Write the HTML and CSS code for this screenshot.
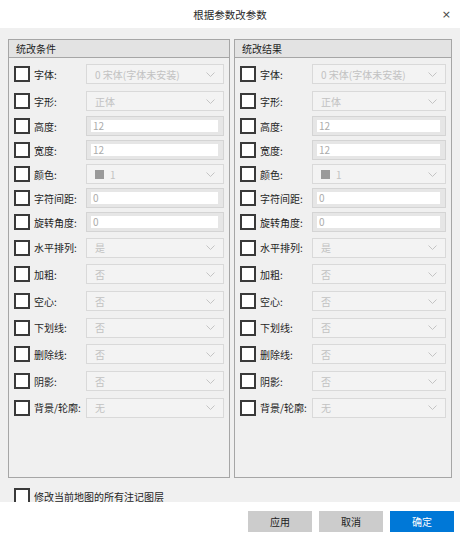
FILE: index.html
```html
<!DOCTYPE html>
<html lang="zh-CN">
<head>
<meta charset="utf-8">
<title>根据参数改参数</title>
<link rel="stylesheet" href="styles.css">
</head>
<body>
<div class="dialog">
  <div class="titlebar">
    <span></span>
    <span class="title">根据参数改参数</span>
    <span class="close">×</span>
  </div>
  <div class="main">
    <div class="groups">
      <section class="group group-left">
        <div class="group-head">统改条件</div>
        <div class="rows">
          <div class="row combo-row"><span class="chk"></span><span class="lbl">字体:</span><div class="combo"><span class="val">0 宋体(字体未安装)</span><svg class="chev" width="9" height="5" viewBox="0 0 9 5"><polyline points="0.5,0.5 4.5,4.5 8.5,0.5" fill="none" stroke="#c4c4c4" stroke-width="1"/></svg></div></div>
          <div class="row combo-row"><span class="chk"></span><span class="lbl">字形:</span><div class="combo"><span class="val">正体</span><svg class="chev" width="9" height="5" viewBox="0 0 9 5"><polyline points="0.5,0.5 4.5,4.5 8.5,0.5" fill="none" stroke="#c4c4c4" stroke-width="1"/></svg></div></div>
          <div class="row text-row"><span class="chk"></span><span class="lbl">高度:</span><div class="edit"><span class="field">12</span></div></div>
          <div class="row text-row"><span class="chk"></span><span class="lbl">宽度:</span><div class="edit"><span class="field">12</span></div></div>
          <div class="row text-row"><span class="chk"></span><span class="lbl">颜色:</span><div class="combo"><span class="swatch"></span><span class="val">1</span><svg class="chev" width="9" height="5" viewBox="0 0 9 5"><polyline points="0.5,0.5 4.5,4.5 8.5,0.5" fill="none" stroke="#c4c4c4" stroke-width="1"/></svg></div></div>
          <div class="row text-row"><span class="chk"></span><span class="lbl">字符间距:</span><div class="edit"><span class="field">0</span></div></div>
          <div class="row text-row"><span class="chk"></span><span class="lbl">旋转角度:</span><div class="edit"><span class="field">0</span></div></div>
          <div class="row combo-row"><span class="chk"></span><span class="lbl">水平排列:</span><div class="combo"><span class="val">是</span><svg class="chev" width="9" height="5" viewBox="0 0 9 5"><polyline points="0.5,0.5 4.5,4.5 8.5,0.5" fill="none" stroke="#c4c4c4" stroke-width="1"/></svg></div></div>
          <div class="row combo-row"><span class="chk"></span><span class="lbl">加粗:</span><div class="combo"><span class="val">否</span><svg class="chev" width="9" height="5" viewBox="0 0 9 5"><polyline points="0.5,0.5 4.5,4.5 8.5,0.5" fill="none" stroke="#c4c4c4" stroke-width="1"/></svg></div></div>
          <div class="row combo-row"><span class="chk"></span><span class="lbl">空心:</span><div class="combo"><span class="val">否</span><svg class="chev" width="9" height="5" viewBox="0 0 9 5"><polyline points="0.5,0.5 4.5,4.5 8.5,0.5" fill="none" stroke="#c4c4c4" stroke-width="1"/></svg></div></div>
          <div class="row combo-row"><span class="chk"></span><span class="lbl">下划线:</span><div class="combo"><span class="val">否</span><svg class="chev" width="9" height="5" viewBox="0 0 9 5"><polyline points="0.5,0.5 4.5,4.5 8.5,0.5" fill="none" stroke="#c4c4c4" stroke-width="1"/></svg></div></div>
          <div class="row combo-row"><span class="chk"></span><span class="lbl">删除线:</span><div class="combo"><span class="val">否</span><svg class="chev" width="9" height="5" viewBox="0 0 9 5"><polyline points="0.5,0.5 4.5,4.5 8.5,0.5" fill="none" stroke="#c4c4c4" stroke-width="1"/></svg></div></div>
          <div class="row combo-row"><span class="chk"></span><span class="lbl">阴影:</span><div class="combo"><span class="val">否</span><svg class="chev" width="9" height="5" viewBox="0 0 9 5"><polyline points="0.5,0.5 4.5,4.5 8.5,0.5" fill="none" stroke="#c4c4c4" stroke-width="1"/></svg></div></div>
          <div class="row combo-row"><span class="chk"></span><span class="lbl">背景/轮廓:</span><div class="combo"><span class="val">无</span><svg class="chev" width="9" height="5" viewBox="0 0 9 5"><polyline points="0.5,0.5 4.5,4.5 8.5,0.5" fill="none" stroke="#c4c4c4" stroke-width="1"/></svg></div></div>
        </div>
      </section>
      <section class="group group-right">
        <div class="group-head">统改结果</div>
        <div class="rows">
          <div class="row combo-row"><span class="chk"></span><span class="lbl">字体:</span><div class="combo"><span class="val">0 宋体(字体未安装)</span><svg class="chev" width="9" height="5" viewBox="0 0 9 5"><polyline points="0.5,0.5 4.5,4.5 8.5,0.5" fill="none" stroke="#c4c4c4" stroke-width="1"/></svg></div></div>
          <div class="row combo-row"><span class="chk"></span><span class="lbl">字形:</span><div class="combo"><span class="val">正体</span><svg class="chev" width="9" height="5" viewBox="0 0 9 5"><polyline points="0.5,0.5 4.5,4.5 8.5,0.5" fill="none" stroke="#c4c4c4" stroke-width="1"/></svg></div></div>
          <div class="row text-row"><span class="chk"></span><span class="lbl">高度:</span><div class="edit"><span class="field">12</span></div></div>
          <div class="row text-row"><span class="chk"></span><span class="lbl">宽度:</span><div class="edit"><span class="field">12</span></div></div>
          <div class="row text-row"><span class="chk"></span><span class="lbl">颜色:</span><div class="combo"><span class="swatch"></span><span class="val">1</span><svg class="chev" width="9" height="5" viewBox="0 0 9 5"><polyline points="0.5,0.5 4.5,4.5 8.5,0.5" fill="none" stroke="#c4c4c4" stroke-width="1"/></svg></div></div>
          <div class="row text-row"><span class="chk"></span><span class="lbl">字符间距:</span><div class="edit"><span class="field">0</span></div></div>
          <div class="row text-row"><span class="chk"></span><span class="lbl">旋转角度:</span><div class="edit"><span class="field">0</span></div></div>
          <div class="row combo-row"><span class="chk"></span><span class="lbl">水平排列:</span><div class="combo"><span class="val">是</span><svg class="chev" width="9" height="5" viewBox="0 0 9 5"><polyline points="0.5,0.5 4.5,4.5 8.5,0.5" fill="none" stroke="#c4c4c4" stroke-width="1"/></svg></div></div>
          <div class="row combo-row"><span class="chk"></span><span class="lbl">加粗:</span><div class="combo"><span class="val">否</span><svg class="chev" width="9" height="5" viewBox="0 0 9 5"><polyline points="0.5,0.5 4.5,4.5 8.5,0.5" fill="none" stroke="#c4c4c4" stroke-width="1"/></svg></div></div>
          <div class="row combo-row"><span class="chk"></span><span class="lbl">空心:</span><div class="combo"><span class="val">否</span><svg class="chev" width="9" height="5" viewBox="0 0 9 5"><polyline points="0.5,0.5 4.5,4.5 8.5,0.5" fill="none" stroke="#c4c4c4" stroke-width="1"/></svg></div></div>
          <div class="row combo-row"><span class="chk"></span><span class="lbl">下划线:</span><div class="combo"><span class="val">否</span><svg class="chev" width="9" height="5" viewBox="0 0 9 5"><polyline points="0.5,0.5 4.5,4.5 8.5,0.5" fill="none" stroke="#c4c4c4" stroke-width="1"/></svg></div></div>
          <div class="row combo-row"><span class="chk"></span><span class="lbl">删除线:</span><div class="combo"><span class="val">否</span><svg class="chev" width="9" height="5" viewBox="0 0 9 5"><polyline points="0.5,0.5 4.5,4.5 8.5,0.5" fill="none" stroke="#c4c4c4" stroke-width="1"/></svg></div></div>
          <div class="row combo-row"><span class="chk"></span><span class="lbl">阴影:</span><div class="combo"><span class="val">否</span><svg class="chev" width="9" height="5" viewBox="0 0 9 5"><polyline points="0.5,0.5 4.5,4.5 8.5,0.5" fill="none" stroke="#c4c4c4" stroke-width="1"/></svg></div></div>
          <div class="row combo-row"><span class="chk"></span><span class="lbl">背景/轮廓:</span><div class="combo"><span class="val">无</span><svg class="chev" width="9" height="5" viewBox="0 0 9 5"><polyline points="0.5,0.5 4.5,4.5 8.5,0.5" fill="none" stroke="#c4c4c4" stroke-width="1"/></svg></div></div>
        </div>
      </section>
    </div>
    <div class="all-layers"><span class="chk"></span><span class="lbl">修改当前地图的所有注记图层</span></div>
  </div>
  <div class="footer">
    <button class="btn">应用</button>
    <button class="btn">取消</button>
    <button class="btn btn-primary">确定</button>
  </div>
</div>
</body>
</html>
```

FILE: styles.css
```css
* { box-sizing: border-box; }
html, body { margin: 0; padding: 0; background: #ffffff; }
body {
  font-family: "Noto Sans CJK SC", "Noto Sans", sans-serif;
  font-size: 10px;
  color: #1e1e1e;
}
.dialog {
  width: 460px;
  height: 537px;
  display: flex;
  flex-direction: column;
  background: #ffffff;
}
.titlebar {
  height: 28px;
  display: grid;
  grid-template-columns: 1fr auto 1fr;
  align-items: center;
  background: #ffffff;
}
.title {
  font-size: 10.5px;
  color: #2a2a2a;
  letter-spacing: 0;
}
.close {
  justify-self: end;
  padding-right: 9px;
  font-family: "DejaVu Sans", sans-serif;
  font-size: 11px;
  color: #444;
  line-height: 1;
}
.main {
  height: 474px;
  background: #f0f0f0;
  padding: 11px 8px 0 8px;
  display: flex;
  flex-direction: column;
}
.groups {
  display: flex;
  gap: 4px;
}
.group {
  height: 439px;
  border: 1px solid #a6a6a6;
  display: flex;
  flex-direction: column;
}
.group-left { width: 222px; }
.group-right { width: 218px; }
.group-head {
  height: 18px;
  background: #e3e3e3;
  border-bottom: 1px solid #a6a6a6;
  padding-left: 7px;
  display: flex;
  align-items: center;
  color: #1e1e1e;
}
.rows {
  padding: 3px 5px 0 5px;
  display: flex;
  flex-direction: column;
}
.row {
  display: grid;
  grid-template-columns: 16px 56px 1fr;
  column-gap: 0;
  align-items: center;
}
.combo-row { height: 26.7px; }
.text-row { height: 24px; }
.chk {
  width: 16px;
  height: 16px;
  border: 2px solid #3a3a3a;
  background: #ffffff;
  display: block;
}
.lbl {
  padding-left: 4px;
  white-space: nowrap;
  color: #1e1e1e;
}
.combo {
  height: 20px;
  border: 1.5px solid #d9d9d9;
  background: #f3f3f3;
  display: flex;
  align-items: center;
  padding: 0 8px 0 8px;
  color: #c2c2c2;
}
.combo .val { flex: 1; white-space: nowrap; }
.chev { flex: none; }
.swatch {
  width: 9px;
  height: 9px;
  background: #9a9a9a;
  margin-right: 6px;
  flex: none;
}
.edit {
  height: 20px;
  border: 1px solid #d4d4d4;
  background: #e6e6e6;
  padding: 3px 5px 3px 4px;
  display: flex;
}
.field {
  flex: 1;
  background: #ffffff;
  padding-left: 2px;
  color: #ababab;
  line-height: 12px;
  display: flex;
  align-items: center;
}
.all-layers {
  margin-top: 10px;
  margin-left: 6px;
  display: flex;
  align-items: center;
  height: 16px;
}
.all-layers .lbl { padding-left: 4px; }
.footer {
  height: 35px;
  background: #ffffff;
  display: flex;
  justify-content: flex-end;
  align-items: flex-start;
  gap: 7px;
  padding: 9px 6px 0 0;
}
.btn {
  width: 64px;
  height: 21px;
  border: 1px solid #cccccc;
  background: #cccccc;
  color: #222;
  font-family: "Noto Sans CJK SC", "Noto Sans", sans-serif;
  font-size: 10px;
  padding: 0;
}
.btn-primary {
  background: #0078d7;
  border-color: #0078d7;
  color: #ffffff;
}
```
